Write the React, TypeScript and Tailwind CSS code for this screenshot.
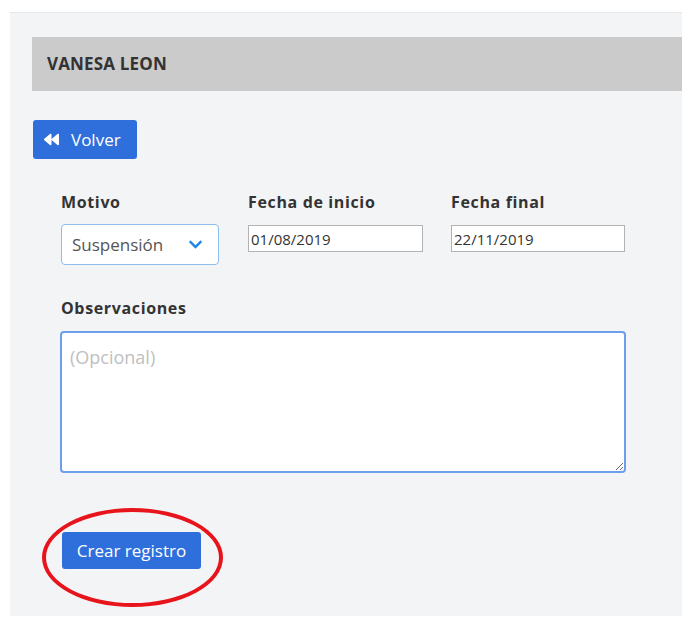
import { FaBackward, FaChevronDown } from "react-icons/fa";

export default function App() {
  return (
    <div
      className="min-h-[618px] bg-white pl-[10px] pt-[12px]"
      style={{ fontFamily: '"Open Sans", "Liberation Sans", sans-serif' }}
    >
      <div className="min-h-[604px] bg-[#f3f4f6] border-t border-[#e6e7ea] pt-[24px]">
        <div className="ml-[22px] h-[54px] bg-[#cbcbcb] flex items-center pl-[15px]">
          <h2 className="text-[17px] font-bold text-[#333] tracking-[0.01em]">VANESA LEON</h2>
        </div>

        <div className="ml-[23px] mt-[29px]">
          <button className="h-[39px] pl-[11px] pr-[16px] bg-[#2f6fdb] rounded-[3px] text-white text-[17px] flex items-center gap-[12px]">
            <FaBackward className="w-[15px] h-[15px]" />
            Volver
          </button>
        </div>

        <div className="ml-[51px] mt-[33px] flex">
          <div className="w-[187px]">
            <label className="block text-[16px] font-bold text-[#333] leading-[20px] tracking-[0.04em]">Motivo</label>
            <div className="mt-[12px] w-[158px] h-[41px] bg-white border border-[#8dbfec] rounded-[4px] flex items-center justify-between pl-[10px] pr-[15px]">
              <span className="text-[17px] text-[#555]">Suspensión</span>
              <FaChevronDown className="w-[15px] h-[15px] text-[#1e87e6]" />
            </div>
          </div>
          <div className="w-[203px]">
            <label className="block text-[16px] font-bold text-[#333] leading-[20px] tracking-[0.04em]">Fecha de inicio</label>
            <input
              readOnly
              value="01/08/2019"
              className="mt-[13px] w-[175px] h-[27px] bg-white border border-[#b3b3b3] px-[2px] text-[15px] text-[#333] outline-none"
            />
          </div>
          <div>
            <label className="block text-[16px] font-bold text-[#333] leading-[20px] tracking-[0.04em]">Fecha final</label>
            <input
              readOnly
              value="22/11/2019"
              className="mt-[13px] w-[174px] h-[27px] bg-white border border-[#b3b3b3] px-[2px] text-[15px] text-[#333] outline-none"
            />
          </div>
        </div>

        <div className="ml-[50px] mt-[33px]">
          <label className="block text-[16px] font-bold text-[#333] leading-[20px] pl-[1px] tracking-[0.04em]">Observaciones</label>
          <textarea
            placeholder="(Opcional)"
            className="mt-[13px] block w-[566px] h-[142px] bg-white border-2 border-[#6d9ded] rounded-[4px] px-[8px] py-[11px] text-[18px] text-[#333] placeholder:text-[#c0c0c0] outline-none"
          />
        </div>

        <div className="ml-[52px] mt-[59px] relative w-[139px]">
          <button className="h-[37px] w-[139px] bg-[#2f6fdb] rounded-[3px] text-white text-[17px]">
            Crear registro
          </button>
          <div className="absolute left-[-20px] top-[-24px] w-[181px] h-[99px] rounded-[50%] border-[4px] border-[#e8141c] pointer-events-none" />
        </div>
      </div>
    </div>
  );
}
